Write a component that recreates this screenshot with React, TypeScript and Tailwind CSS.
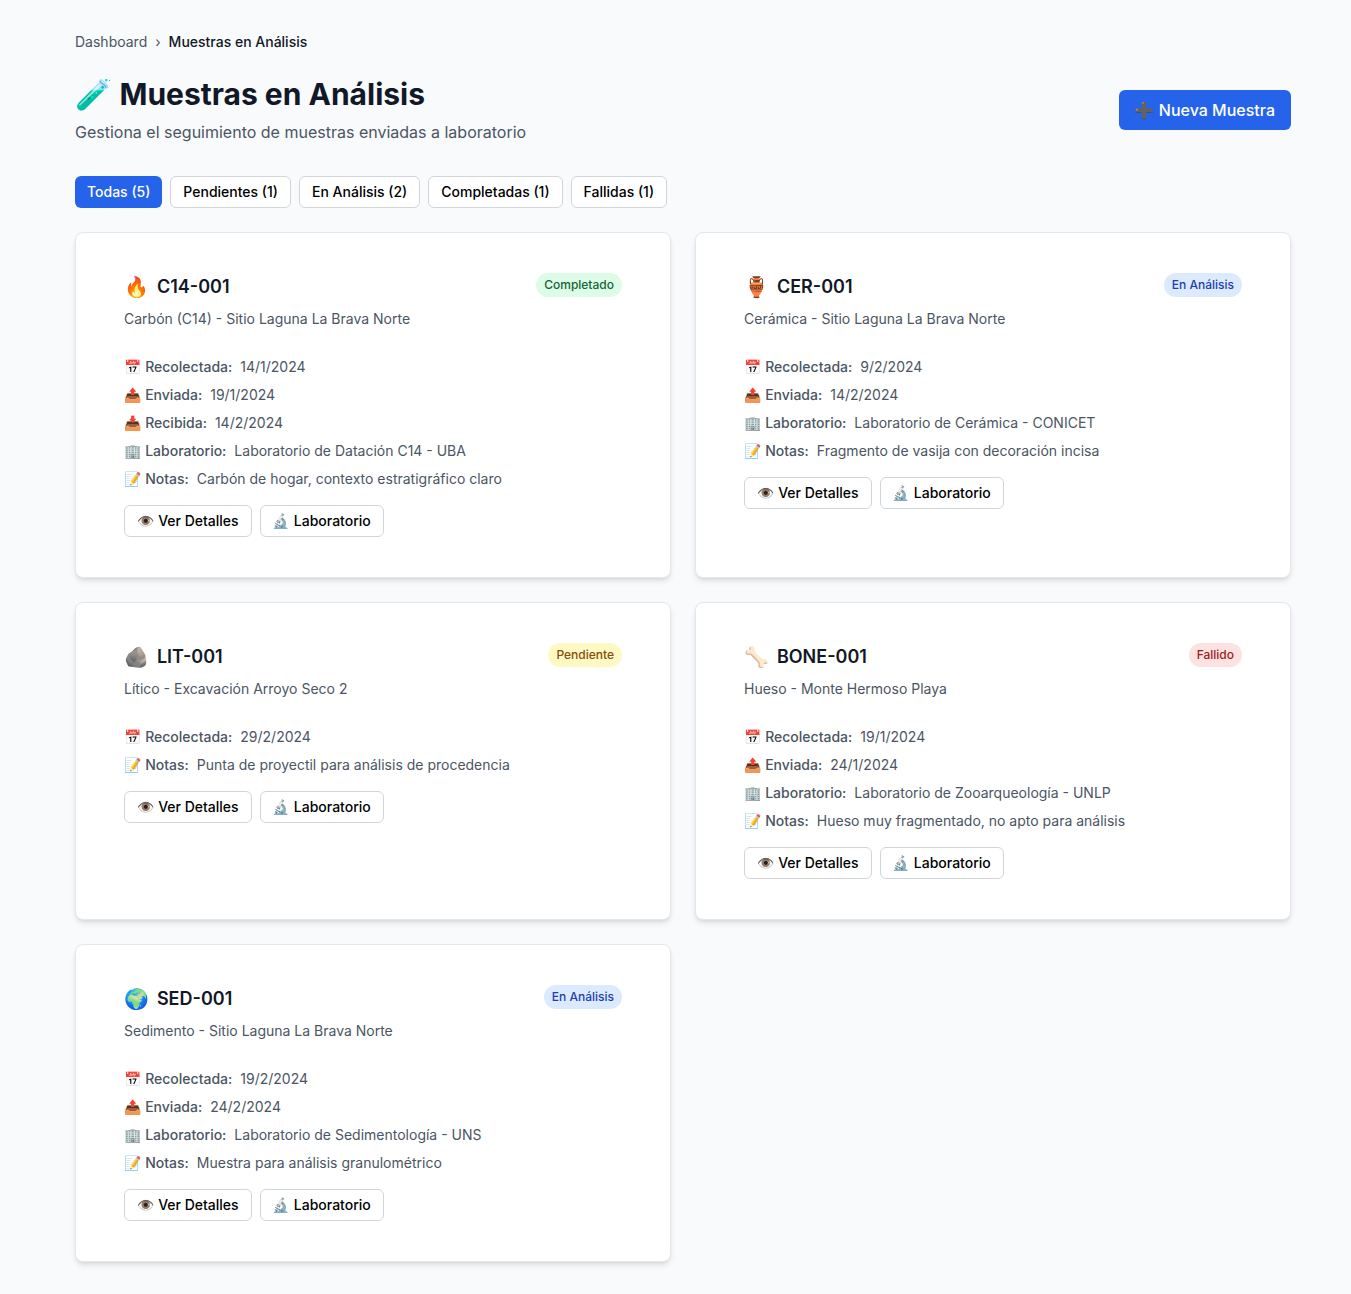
import type { ReactNode } from 'react';

type Row = { icon: string; label: string; value: string };

type Sample = {
  emoji: string;
  code: string;
  subtitle: string;
  status: string;
  statusClass: string;
  rows: Row[];
};

const filters = ['Todas (5)', 'Pendientes (1)', 'En Análisis (2)', 'Completadas (1)', 'Fallidas (1)'];

const samples: Sample[] = [
  {
    emoji: '🔥',
    code: 'C14-001',
    subtitle: 'Carbón (C14) - Sitio Laguna La Brava Norte',
    status: 'Completado',
    statusClass: 'bg-[#dcfce7] text-[#166534]',
    rows: [
      { icon: '📅', label: 'Recolectada:', value: '14/1/2024' },
      { icon: '📤', label: 'Enviada:', value: '19/1/2024' },
      { icon: '📥', label: 'Recibida:', value: '14/2/2024' },
      { icon: '🏢', label: 'Laboratorio:', value: 'Laboratorio de Datación C14 - UBA' },
      { icon: '📝', label: 'Notas:', value: 'Carbón de hogar, contexto estratigráfico claro' },
    ],
  },
  {
    emoji: '🏺',
    code: 'CER-001',
    subtitle: 'Cerámica - Sitio Laguna La Brava Norte',
    status: 'En Análisis',
    statusClass: 'bg-[#dbeafe] text-[#1e40af]',
    rows: [
      { icon: '📅', label: 'Recolectada:', value: '9/2/2024' },
      { icon: '📤', label: 'Enviada:', value: '14/2/2024' },
      { icon: '🏢', label: 'Laboratorio:', value: 'Laboratorio de Cerámica - CONICET' },
      { icon: '📝', label: 'Notas:', value: 'Fragmento de vasija con decoración incisa' },
    ],
  },
  {
    emoji: '🪨',
    code: 'LIT-001',
    subtitle: 'Lítico - Excavación Arroyo Seco 2',
    status: 'Pendiente',
    statusClass: 'bg-[#fef9c3] text-[#854d0e]',
    rows: [
      { icon: '📅', label: 'Recolectada:', value: '29/2/2024' },
      { icon: '📝', label: 'Notas:', value: 'Punta de proyectil para análisis de procedencia' },
    ],
  },
  {
    emoji: '🦴',
    code: 'BONE-001',
    subtitle: 'Hueso - Monte Hermoso Playa',
    status: 'Fallido',
    statusClass: 'bg-[#fee2e2] text-[#991b1b]',
    rows: [
      { icon: '📅', label: 'Recolectada:', value: '19/1/2024' },
      { icon: '📤', label: 'Enviada:', value: '24/1/2024' },
      { icon: '🏢', label: 'Laboratorio:', value: 'Laboratorio de Zooarqueología - UNLP' },
      { icon: '📝', label: 'Notas:', value: 'Hueso muy fragmentado, no apto para análisis' },
    ],
  },
  {
    emoji: '🌍',
    code: 'SED-001',
    subtitle: 'Sedimento - Sitio Laguna La Brava Norte',
    status: 'En Análisis',
    statusClass: 'bg-[#dbeafe] text-[#1e40af]',
    rows: [
      { icon: '📅', label: 'Recolectada:', value: '19/2/2024' },
      { icon: '📤', label: 'Enviada:', value: '24/2/2024' },
      { icon: '🏢', label: 'Laboratorio:', value: 'Laboratorio de Sedimentología - UNS' },
      { icon: '📝', label: 'Notas:', value: 'Muestra para análisis granulométrico' },
    ],
  },
];

function OutlineButton({ children }: { children: ReactNode }) {
  return (
    <button
      type="button"
      className="h-8 rounded-md border border-[#d1d5db] bg-white px-3 text-sm font-medium text-black"
    >
      {children}
    </button>
  );
}

function SampleCard({ sample }: { sample: Sample }) {
  return (
    <div className="rounded-lg border border-[#e5e7eb] bg-white px-12 py-10 shadow-md">
      <div className="flex items-start justify-between">
        <div>
          <h3 className="flex h-7 items-center gap-2 text-lg font-semibold leading-7 text-[#111827]">
            <span className="text-xl">{sample.emoji}</span>
            <span>{sample.code}</span>
          </h3>
          <p className="mt-2 text-sm leading-5 text-[#4b5563]">{sample.subtitle}</p>
        </div>
        <span className={`rounded-full px-2 py-1 text-xs font-medium leading-4 ${sample.statusClass}`}>{sample.status}</span>
      </div>
      <div className="mt-6 flex flex-col gap-2 pt-1">
        {sample.rows.map((row) => (
          <div key={row.label} className="text-sm leading-5 text-[#4b5563]">
            <span className="font-medium">{row.icon} {row.label}</span>
            <span className="ml-2">{row.value}</span>
          </div>
        ))}
      </div>
      <div className="mt-4 flex gap-2">
        <OutlineButton>👁️ Ver Detalles</OutlineButton>
        <OutlineButton>🔬 Laboratorio</OutlineButton>
      </div>
    </div>
  );
}

export default function App() {
  return (
    <div
      className="min-h-screen bg-[#f9fafb] pb-8 pl-[75px] pr-[60px] pt-8"
      style={{ fontFamily: 'Inter, "Noto Color Emoji", sans-serif' }}
    >
      {/* breadcrumb */}
      <div className="flex items-center gap-2 text-sm leading-5">
        <span className="text-[#4b5563]">Dashboard</span>
        <span className="text-[#4b5563]">›</span>
        <span className="font-medium text-[#111827]">Muestras en Análisis</span>
      </div>

      {/* header */}
      <div className="mt-6 flex items-center justify-between">
        <div>
          <h1 className="text-3xl font-bold leading-9 text-[#111827]">🧪 Muestras en Análisis</h1>
          <p className="mt-2 text-base leading-6 text-[#4b5563]">Gestiona el seguimiento de muestras enviadas a laboratorio</p>
        </div>
        <button type="button" className="h-10 rounded-md bg-[#2563eb] px-4 text-base font-medium text-white">
          ➕ Nueva Muestra
        </button>
      </div>

      {/* filtros */}
      <div className="mt-8 flex gap-2">
        {filters.map((f, i) => (
          <button
            key={f}
            type="button"
            className={
              i === 0
                ? 'h-8 rounded-md bg-[#2563eb] px-3 text-sm font-medium text-white'
                : 'h-8 rounded-md border border-[#d1d5db] bg-white px-3 text-sm font-medium text-black'
            }
          >
            {f}
          </button>
        ))}
      </div>

      <div className="mt-6 grid grid-cols-2 items-stretch gap-6">
        {samples.map((s) => (
          <SampleCard key={s.code} sample={s} />
        ))}
      </div>
    </div>
  );
}
